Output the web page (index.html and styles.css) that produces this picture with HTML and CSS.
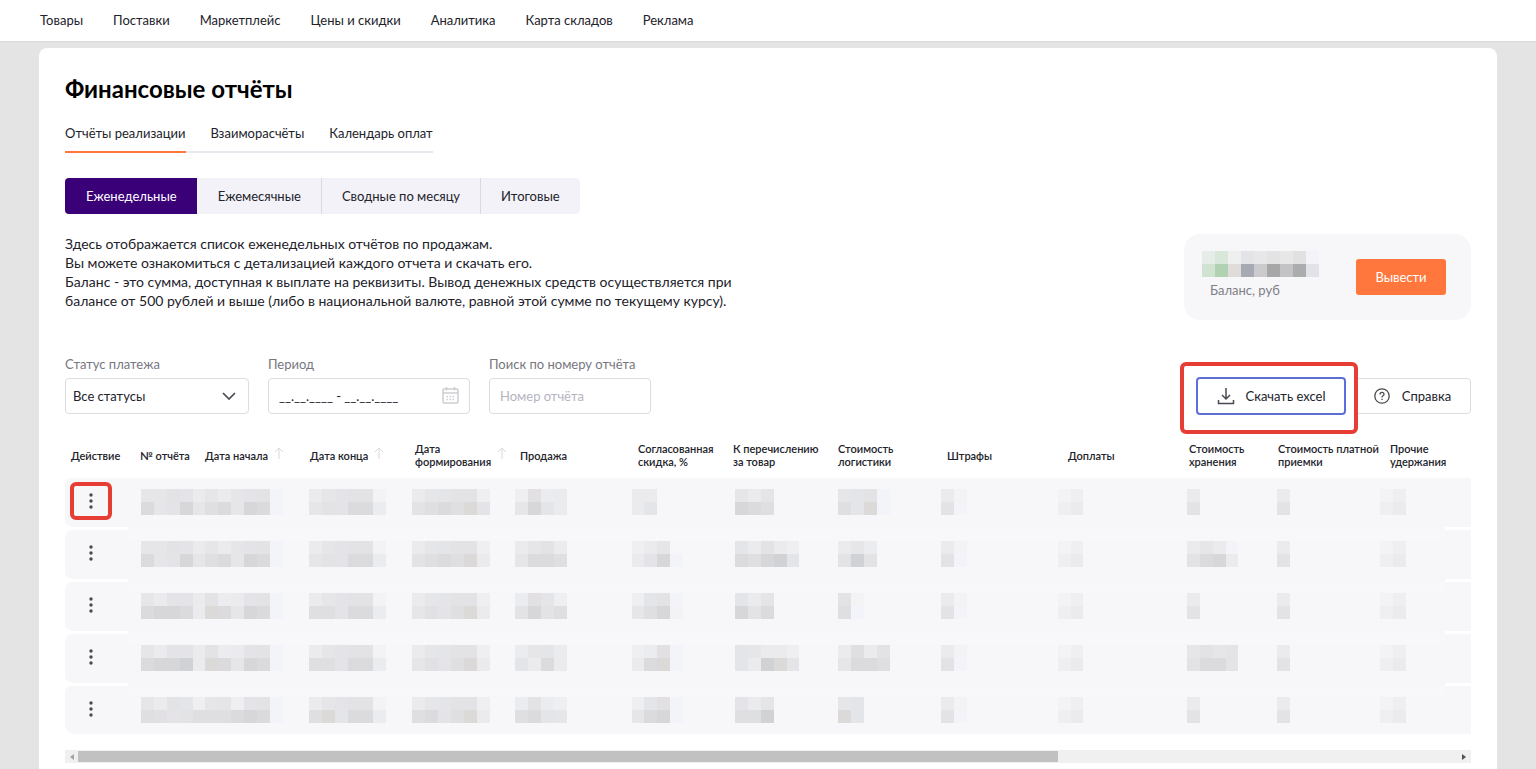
FILE: index.html
```html
<!DOCTYPE html>
<html lang="ru">
<head>
<meta charset="utf-8">
<meta name="viewport" content="width=device-width, initial-scale=1">
<title>Финансовые отчёты</title>
<link rel="stylesheet" href="styles.css">
</head>
<body>
<header class="topbar">
  <nav class="topnav" aria-label="Основное меню">
    <a href="#">Товары</a>
    <a href="#">Поставки</a>
    <a href="#">Маркетплейс</a>
    <a href="#">Цены и скидки</a>
    <a href="#">Аналитика</a>
    <a href="#">Карта складов</a>
    <a href="#">Реклама</a>
  </nav>
</header>
<main class="page">
  <section class="card">
    <h1 class="title">Финансовые отчёты</h1>
    <nav class="tabs" aria-label="Разделы">
      <a class="tab tab-active" href="#">Отчёты реализации</a>
      <a class="tab" href="#">Взаиморасчёты</a>
      <a class="tab" href="#">Календарь оплат</a>
    </nav>
    <div class="segments">
      <button class="segment segment-active" type="button">Еженедельные</button>
      <button class="segment" type="button">Ежемесячные</button>
      <button class="segment" type="button">Сводные по месяцу</button>
      <button class="segment" type="button">Итоговые</button>
    </div>
    <div class="summary">
      <p class="intro">Здесь отображается список еженедельных отчётов по продажам.<br>Вы можете ознакомиться с детализацией каждого отчета и скачать его.<br>Баланс - это сумма, доступная к выплате на реквизиты. Вывод денежных средств осуществляется при<br>балансе от 500 рублей и выше (либо в национальной валюте, равной этой сумме по текущему курсу).</p>
      <div class="balance">
        <div class="balance-info">
          <svg class="balance-value" viewBox="0 0 9 2" preserveAspectRatio="none" shape-rendering="crispEdges" aria-hidden="true">
            <path fill="#e6ede8" d="M0 0h1v1H0z"/><path fill="#d7e8da" d="M1 0h1v1H1z"/><path fill="#efeff0" d="M2 0h1v1H2z"/><path fill="#e3e4e8" d="M3 0h1v1H3z"/><path fill="#e7e7e9" d="M4 0h1v1H4z"/><path fill="#e3e3e4" d="M5 0h1v1H5z"/><path fill="#e7e7e8" d="M6 0h1v1H6z"/><path fill="#e1e1e2" d="M7 0h1v1H7z"/><path fill="#f2f4f9" d="M8 0h1v1H8z"/>
            <path fill="#cfe3d0" d="M0 1h1v1H0z"/><path fill="#b0d2b2" d="M1 1h1v1H1z"/><path fill="#dfdcd9" d="M2 1h1v1H2z"/><path fill="#a7aab3" d="M3 1h1v1H3z"/><path fill="#cbcbcd" d="M4 1h1v1H4z"/><path fill="#a7a7a7" d="M5 1h1v1H5z"/><path fill="#c3c3c5" d="M6 1h1v1H6z"/><path fill="#abacae" d="M7 1h1v1H7z"/><path fill="#e2e2e9" d="M8 1h1v1H8z"/>
          </svg>
          <span class="balance-label">Баланс, руб</span>
        </div>
        <button class="withdraw" type="button">Вывести</button>
      </div>
    </div>
    <div class="toolbar">
      <div class="field field-status">
        <label for="status">Статус платежа</label>
        <div class="control">
          <select id="status"><option>Все статусы</option></select>
          <svg class="chevron" viewBox="0 0 14 8" aria-hidden="true"><path d="M1 1l6 6 6-6"/></svg>
        </div>
      </div>
      <div class="field field-period">
        <label for="period">Период</label>
        <div class="control">
          <input id="period" type="text" value="__.__.____ - __.__.____">
          <svg class="calendar" viewBox="0 0 17 17" aria-hidden="true"><path d="M2 2h13q1 0 1 1v12q0 1-1 1H2q-1 0-1-1V3q0-1 1-1zM1 6h15M4.500 0v3.500M12.500 0v3.500"/><path class="dots" d="M7.500 9.500h1.500M10.500 9.500h1.500M4.500 9.500h1.500M4.500 12.500h1.500M7.500 12.500h1.500M10.500 12.500h1.500"/></svg>
        </div>
      </div>
      <div class="field field-search">
        <label for="search">Поиск по номеру отчёта</label>
        <div class="control"><input id="search" type="text" placeholder="Номер отчёта"></div>
      </div>
      <div class="actions">
        <button class="action download" type="button">
          <svg class="icon-download" viewBox="0 0 18 18" aria-hidden="true"><path d="M9 1v11M5 8l4 4 4-4M1.500 13v3.500h15V13"/></svg>
          Скачать excel
        </button>
        <button class="action help" type="button">
          <svg class="icon-help" viewBox="0 0 16 16" aria-hidden="true"><circle cx="8" cy="8" r="7.200"/><path d="M6 6.500q0-2.200 2-2.200t2 1.900q0 1-1.100 1.600Q8 8.300 8 9.400M8 10.700v1.200"/></svg>
          Справка
        </button>
      </div>
    </div>
    <table class="reports">
      <colgroup>
        <col class="w63"><col class="w65"><col class="w105"><col class="w105"><col class="w105"><col class="w118"><col class="w95"><col class="w105"><col class="w109"><col class="w121"><col class="w121"><col class="w89"><col class="w112"><col class="w67"><col class="w26">
      </colgroup>
      <thead>
        <tr>
          <th scope="col">Действие</th>
          <th scope="col">№ отчёта</th>
          <th scope="col"><span class="sortable">Дата начала <svg class="sort" viewBox="0 0 10 12" aria-hidden="true"><path d="M5 12V1M1 5l4-4 4 4"/></svg></span></th>
          <th scope="col"><span class="sortable">Дата конца <svg class="sort" viewBox="0 0 10 12" aria-hidden="true"><path d="M5 12V1M1 5l4-4 4 4"/></svg></span></th>
          <th scope="col"><span class="sortable"><span>Дата<br>формирования</span> <svg class="sort" viewBox="0 0 10 12" aria-hidden="true"><path d="M5 12V1M1 5l4-4 4 4"/></svg></span></th>
          <th scope="col">Продажа</th>
          <th scope="col">Согласованная<br>скидка, %</th>
          <th scope="col">К перечислению<br>за товар</th>
          <th scope="col">Стоимость<br>логистики</th>
          <th scope="col">Штрафы</th>
          <th scope="col">Доплаты</th>
          <th scope="col">Стоимость<br>хранения</th>
          <th scope="col">Стоимость платной<br>приемки</th>
          <th scope="col">Прочие<br>удержания</th>
          <td></td>
        </tr>
      </thead>
      <tbody id="rows"></tbody>
    </table>
    <div class="scroll" aria-hidden="true">
      <svg class="arrow arrow-off" viewBox="0 0 4 6"><path d="M4 0v6L0 3z"/></svg>
      <div class="track"><div class="thumb"></div></div>
      <svg class="arrow" viewBox="0 0 4 6"><path d="M0 0v6l4-3z"/></svg>
    </div>
  </section>
</main>
<script src="rows.js"></script>
</body>
</html>
```
FILE: styles.css
```css
* { box-sizing: border-box; }
body {
  margin: 0;
  min-height: 100vh;
  display: flex;
  flex-direction: column;
  background: #e4e4e4;
  color: #22222a;
  font: 13px/20px Lato, "Liberation Sans", sans-serif;
}
button, input, select { font: inherit; color: inherit; margin: 0; }
button { cursor: pointer; }
svg { display: block; fill: none; flex: none; }
a { color: inherit; text-decoration: none; }

.topbar { background: #fff; border-bottom: 1px solid #d9d9d9; padding: 10px 40px; }
.topnav { display: flex; gap: 30px; height: 21px; }

.page { flex: 1; display: flex; padding: 6px 39px 0; }
.card { flex: 1; min-width: 0; background: #fff; border-radius: 8px 8px 0 0; padding: 25px 26px 6px; }
.title { margin: 0; color: #000; font-size: 24px; line-height: 32px; font-weight: 700; }

.tabs { display: flex; gap: 25px; width: max-content; margin-top: 18px; box-shadow: inset 0 -2px #e8e8ee; }
.tab { height: 30px; }
.tab-active { border-bottom: 2px solid #ff773c; }

.segments { display: flex; width: max-content; margin-top: 25px; border-radius: 4px; overflow: hidden; background: #f3f2f8; }
.segment { height: 36px; padding: 0 20px; border: 0; border-left: 1px solid #dadae0; background: none; }
.segment-active { padding-left: 21px; background: #3a0078; color: #fff; border-left: 0; }
.segment-active + .segment { padding-left: 21px; border-left: 0; }

.summary { display: flex; justify-content: space-between; align-items: flex-start; margin-top: 20px; }
.intro { margin: 0; font-size: 14px; line-height: 19px; }
.balance { display: flex; justify-content: space-between; align-items: flex-start; width: 287px; height: 86px; padding: 17px 25px 0 18px; border-radius: 16px; background: #f7f7f9; }
.balance-value { width: 117px; height: 26px; }
.balance-label { display: block; margin-top: 3px; padding-left: 8px; color: #7f7f87; }
.withdraw { width: 90px; height: 36px; margin-top: 8px; border: 0; border-radius: 3px; background: #ff773c; color: #fff; }

.toolbar { display: flex; align-items: flex-end; gap: 19px; margin-top: 34px; }
.field label { display: block; color: #77777f; margin-bottom: 4px; }
.field-status { width: 184px; }
.field-period { width: 202px; }
.field-search { width: 162px; }
.control { position: relative; }
.control select, .control input {
  display: block; width: 100%; height: 36px; padding: 0 10px;
  border: 1px solid #dcdce2; border-radius: 4px; background: #fff; appearance: none; outline: 0;
}
.control select { padding: 0 7px; }
.control input::placeholder { color: #b4b4bf; opacity: 1; }
.chevron { position: absolute; right: 13px; top: 14px; width: 14px; height: 8px; stroke: #4a4a52; stroke-width: 1.7; pointer-events: none; }
.calendar { position: absolute; right: 11px; top: 9px; width: 17px; height: 17px; stroke: #cdcdd4; stroke-width: 1.5; }

.actions { display: flex; gap: 8px; margin-left: auto; }
.action { position: relative; display: flex; align-items: center; justify-content: center; height: 36px; background: #fff; border: 1px solid #dcdce2; border-radius: 4px; }
.download { width: 150px; height: 38px; margin-bottom: -1px; gap: 11px; border: 2px solid #5c6fd8; }
.download::after { content: ""; position: absolute; z-index: 1; inset: -17px -14px -21px -18px; border: 4px solid #e63e34; border-radius: 6px; pointer-events: none; }
.help { width: 117px; height: 36px; margin-top: 1px; gap: 12px; }
.icon-download { width: 18px; height: 18px; stroke: #4a4a52; stroke-width: 1.5; }
.icon-help { width: 16px; height: 16px; stroke: #4a4a52; stroke-width: 1.3; }

.reports { width: 100%; margin-top: 20px; table-layout: fixed; border-collapse: separate; border-spacing: 0; }
.reports th { height: 44px; padding: 0 0 2px 12px; text-align: left; vertical-align: middle; font-size: 11px; line-height: 13px; font-weight: 600; white-space: nowrap; }
.reports th:first-child { padding-left: 6px; }
.reports td { padding: 0; }
.w26 { width: 26px; } .w63 { width: 63px; } .w65 { width: 65px; } .w67 { width: 67px; }
.w89 { width: 89px; } .w95 { width: 95px; } .w105 { width: 105px; } .w109 { width: 109px; }
.w112 { width: 112px; } .w118 { width: 118px; } .w121 { width: 121px; }
.sortable { display: flex; align-items: center; gap: 6px; }
.sort { width: 10px; height: 12px; margin-bottom: 4px; stroke: #d9d9de; }

.reports tbody td { height: 52px; background: #f7f7f9; background-clip: padding-box; border-bottom: 3px solid transparent; vertical-align: top; }
.reports tbody .menu-cell { border-radius: 6px 0 0 9px; }
.reports tbody .values { border-bottom: 0; padding-top: 11px; }
.reports tbody tr + tr .values { background: linear-gradient(#f8f8fa 10px, #f7f7f9 10px); }
.reports tbody tr:last-child td { height: 48px; border-bottom: 0; }
.mosaic { width: 100%; height: 26px; }
.menu { position: relative; display: grid; place-items: center; width: 42px; height: 38px; margin: 4px 0 0 5px; padding: 0 1px 0 0; border: 0; background: none; }
.menu svg { width: 4px; height: 16px; fill: #4a4a52; }
.menu-marked::after { content: ""; position: absolute; inset: 0; border: 4px solid #e63e34; border-radius: 6px; }

.scroll { display: flex; align-items: center; height: 13px; margin-top: 16px; padding: 0 5px; gap: 4px; background: #f0f0f0; }
.arrow { width: 4px; height: 6px; fill: #505050; }
.arrow-off { fill: #a3a3a3; }
.track { flex: 1; }
.thumb { width: 71%; height: 11px; background: #c1c1c1; }
```
FILE: rows.js
```js
// Shades of the hidden values, one letter per mosaic cell.
const shades = {
  a: '#efeff1', b: '#ebebed', c: '#e6e6e8', d: '#e3e3e5', e: '#dfdfe1', f: '#dbdbdd', g: '#d7d7d9', h: '#d1d2d5',
  p: '#e3e3e8', q: '#e3e5e9', r: '#e3e0e3', s: '#dcdad9', u: '#f3f4f9', v: '#f3f3f5', w: '#eaecf0'
};
// First mosaic column of each group of values.
const starts = [1, 14, 22, 30, 39, 47, 55, 63, 72, 82, 89, 97];
const rows = [
  ['ccdpbcbcpdu/fcpgcefcgfu', 'bcpddv/cdpffw', 'bcqdda/defesp', 'arwb/cgqb', 'bb/bq', 'cbq/gfe', 'cqdu/eqsu', 'bv/du', 'va/ab', 'b/d', 'b/d', 'va/ab'],
  ['ccdpbcbcpdu/fcpgcefcgfu', 'bcpddv/cdpffw', 'bcqdda/defesb', 'bcdb/cffe', 'abc./bpgu', 'qbdba/feghq', 'bcw./dhd.', 'bv/du', 'va/ab', 'bcbu/dfgb', 'b/d', 'va/ab'],
  ['cbppbdwbpdu/fggfbsfcgfu', 'bcpddv/eepffw', 'bcqdda/crpesb', 'wrqa/dgde', 'aqdu/cegv', 'qbq/gdf', 'dv/eu', 'bv/du', 'va/ab', 'b/d', 'b/d', 'va/ab'],
  ['cbppbdwbpdu/fgghbsfcgfu', 'bcpddv/eepffw', 'bcqdda/crpesb', 'wcqb/qbfb', 'awru/bfsu', 'qcbba/qbhsq', 'bebd/cffe', 'bv/du', 'va/ab', 'cdcp/dffp', 'b/d', 'va/ab'],
  ['cbdqacqapdu/erpdeeefgfu', 'bcpddv/esqffw', 'bcqdda/efpesb', 'wdwa/efqc', 'aqru/cfgu', 'pbq/eeh', 'cq/sq', 'bv/du', 'va/ab', 'b/d', 'b/d', 'va/ab']
];

const mosaic = groups => groups.map((group, i) =>
  group.split('/').map((line, y) =>
    [...line].map((key, x) =>
      shades[key] ? `<rect x="${starts[i] + x}" y="${y}" width="1" height="1" fill="${shades[key]}"/>` : ''
    ).join('')
  ).join('')
).join('');

document.getElementById('rows').innerHTML = rows.map((groups, i) => `
  <tr>
    <td class="menu-cell">
      <button class="menu${i ? '' : ' menu-marked'}" type="button" aria-label="Действия">
        <svg viewBox="0 0 4 16"><circle cx="2" cy="2" r="1.700"/><circle cx="2" cy="8" r="1.700"/><circle cx="2" cy="14" r="1.700"/></svg>
      </button>
    </td>
    <td class="values" colspan="13">
      <svg class="mosaic" viewBox="0 0 102 2" preserveAspectRatio="none" shape-rendering="crispEdges">${mosaic(groups)}</svg>
    </td>
    <td></td>
  </tr>`).join('');
```
